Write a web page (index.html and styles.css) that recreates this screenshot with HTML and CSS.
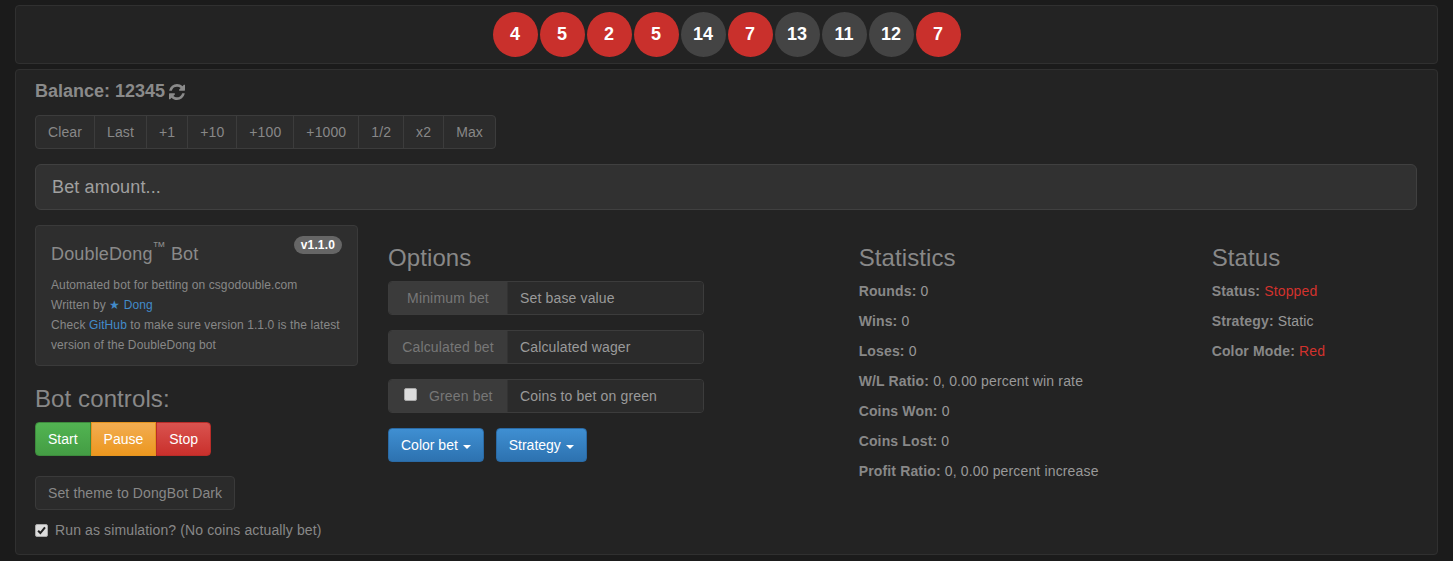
FILE: index.html
```html
<!DOCTYPE html>
<html>
<head>
<meta charset="utf-8">
<title>DoubleDong Bot</title>
<link rel="stylesheet" href="styles.css">
</head>
<body>
<div class="page">
  <div class="panel history">
    <span class="ball red">4</span>
    <span class="ball red">5</span>
    <span class="ball red">2</span>
    <span class="ball red">5</span>
    <span class="ball black">14</span>
    <span class="ball red">7</span>
    <span class="ball black">13</span>
    <span class="ball black">11</span>
    <span class="ball black">12</span>
    <span class="ball red">7</span>
  </div>

  <div class="panel main">
    <h4 class="balance">Balance: 12345
      <svg class="refresh" viewBox="0 0 1536 1536" width="16" height="16"><path fill="#8a8a8a" d="M1511 928q0 5-1 7-64 268-268 434.5T764 1536q-146 0-282.5-55T238 1324l-129 129q-19 19-45 19t-45-19-19-45V960q0-26 19-45t45-19h448q26 0 45 19t19 45-19 45l-137 137q71 66 161 102t187 36q134 0 250-65t186-179q11-17 53-117 8-23 30-23h192q13 0 22.5 9.5t9.5 22.5zm25-800v448q0 26-19 45t-45 19h-448q-26 0-45-19t-19-45 19-45l138-138Q969 256 768 256q-134 0-250 65T332 500q-11 17-53 117-8 23-30 23H50q-13 0-22.5-9.5T18 608v-7q65-268 270-434.5T768 0q146 0 284 55.5T1297 212l130-129q19-19 45-19t45 19 19 45z"/></svg>
    </h4>

    <div class="btn-group">
      <button class="btn">Clear</button><button class="btn">Last</button><button class="btn">+1</button><button class="btn">+10</button><button class="btn">+100</button><button class="btn">+1000</button><button class="btn">1/2</button><button class="btn">x2</button><button class="btn">Max</button>
    </div>

    <input class="bet-input" type="text" placeholder="Bet amount...">

    <div class="row">
      <div class="col col-3">
        <div class="well">
          <span class="badge">v1.1.0</span>
          <h4 class="bot-title">DoubleDong<sup>™</sup> Bot</h4>
          <div class="small-line">Automated bot for betting on csgodouble.com</div>
          <div class="small-line">Written by <a class="link" href="#">★ Dong</a></div>
          <div class="small-line">Check <a class="link" href="#">GitHub</a> to make sure version 1.1.0 is the latest</div>
          <div class="small-line">version of the DoubleDong bot</div>
        </div>
        <h3 class="heading">Bot controls:</h3>
        <div class="ctrl-group">
          <button class="btn-c start">Start</button><button class="btn-c pause">Pause</button><button class="btn-c stop">Stop</button>
        </div>
        <button class="btn theme-btn">Set theme to DongBot Dark</button>
        <div class="sim">
          <span class="cbox checked"><svg viewBox="0 0 12 12" width="11" height="11"><path d="M2.3 6.2 L4.8 8.8 L9.8 2.6" fill="none" stroke="#222" stroke-width="2.2"/></svg></span>
          <span>Run as simulation? (No coins actually bet)</span>
        </div>
      </div>

      <div class="col col-4">
        <h3 class="heading">Options</h3>
        <div class="input-group">
          <span class="addon">Minimum bet</span>
          <span class="field">Set base value</span>
        </div>
        <div class="input-group">
          <span class="addon">Calculated bet</span>
          <span class="field">Calculated wager</span>
        </div>
        <div class="input-group">
          <span class="addon addon-check"><span class="cbox"></span><span>Green bet</span></span>
          <span class="field">Coins to bet on green</span>
        </div>
        <div class="dropdowns">
          <button class="btn-blue">Color bet <span class="caret"></span></button>
          <button class="btn-blue">Strategy <span class="caret"></span></button>
        </div>
      </div>

      <div class="col col-3">
        <h3 class="heading">Statistics</h3>
        <p class="stat"><b>Rounds:</b> 0</p>
        <p class="stat"><b>Wins:</b> 0</p>
        <p class="stat"><b>Loses:</b> 0</p>
        <p class="stat"><b>W/L Ratio:</b> 0, 0.00 percent win rate</p>
        <p class="stat"><b>Coins Won:</b> 0</p>
        <p class="stat"><b>Coins Lost:</b> 0</p>
        <p class="stat"><b>Profit Ratio:</b> 0, 0.00 percent increase</p>
      </div>

      <div class="col col-2">
        <h3 class="heading">Status</h3>
        <p class="stat"><b>Status:</b> <span class="red-text">Stopped</span></p>
        <p class="stat"><b>Strategy:</b> Static</p>
        <p class="stat"><b>Color Mode:</b> <span class="red-text">Red</span></p>
      </div>
    </div>
  </div>
</div>
</body>
</html>
```

FILE: styles.css
```css
* { box-sizing: border-box; }
html, body { margin: 0; padding: 0; }
body {
  background: #1b1b1b;
  font-family: "Liberation Sans", Arial, sans-serif;
  font-size: 14px;
  line-height: 20px;
  color: #8a8a8a;
  letter-spacing: 0.15px;
}
.page { padding: 5px 15px 0 15px; }

.panel {
  background: #232323;
  border: 1px solid #303030;
  border-radius: 4px;
}
.history {
  height: 59px;
  padding: 6px 0;
  display: flex;
  justify-content: center;
  gap: 2px;
  margin-bottom: 5px;
}
.ball {
  width: 45px;
  height: 45px;
  border-radius: 50%;
  color: #fff;
  font-weight: bold;
  font-size: 18px;
  line-height: 45px;
  text-align: center;
  letter-spacing: 0;
}
.ball.red { background: #c9302c; }
.ball.black { background: #444; }

.main { padding: 11px 20px 14px 19px; }

.balance {
  margin: 0;
  font-size: 18px;
  line-height: 20px;
  font-weight: bold;
  color: #8a8a8a;
  letter-spacing: 0;
  display: flex;
  align-items: center;
  gap: 4px;
}
.refresh { margin-top: 1px; }

.btn-group {
  display: inline-flex;
  margin-top: 14px;
}
.btn {
  font-family: inherit;
  font-size: 14px;
  line-height: 20px;
  letter-spacing: 0.12px;
  padding: 6px 12px;
  background: #2c2c2c;
  border: 1px solid #3c3c3c;
  color: #888;
  border-radius: 4px;
  height: 34px;
}
.btn-group .btn { border-radius: 0; margin-left: -1px; }
.btn-group .btn:first-child { border-radius: 4px 0 0 4px; margin-left: 0; }
.btn-group .btn:last-child { border-radius: 0 4px 4px 0; }

.bet-input {
  display: block;
  width: 100%;
  height: 46px;
  margin-top: 15px;
  padding: 10px 16px;
  font-family: inherit;
  font-size: 18px;
  letter-spacing: 0.15px;
  background: #313131;
  border: 1px solid #404040;
  border-radius: 6px;
  color: #a0a0a0;
  outline: none;
}
.bet-input::placeholder { color: #a0a0a0; }

.row {
  display: flex;
  margin: 15px -15px 0 -15px;
}
.col { padding: 0 15px; }
.col-2 { width: 16.6667%; }
.col-3 { width: 25%; }
.col-4 { width: 33.3333%; }

.well {
  position: relative;
  background: #2e2e2e;
  border: 1px solid #3a3a3a;
  border-radius: 4px;
  padding: 19px 15px 10px 15px;
}
.badge {
  position: absolute;
  top: 10px;
  right: 15px;
  background: #666;
  color: #fff;
  font-weight: bold;
  font-size: 12px;
  line-height: 12px;
  padding: 3px 7px;
  border-radius: 9px;
}
.bot-title {
  margin: 0 0 10px 0;
  font-size: 18px;
  line-height: 1.1;
  font-weight: normal;
  color: #8a8a8a;
}
.bot-title sup { font-size: 13px; line-height: 0; position: relative; top: -2px; }
.small-line { font-size: 12px; line-height: 20px; color: #888; letter-spacing: 0.1px; }
.link { color: #428bca; text-decoration: none; }

.heading {
  margin: 20px 0 10px 0;
  font-size: 24px;
  line-height: 1.1;
  font-weight: normal;
  color: #888;
  letter-spacing: 0.1px;
}

.ctrl-group { display: flex; }
.btn-c {
  font-family: inherit;
  font-size: 14px;
  line-height: 20px;
  height: 34px;
  padding: 6px 12px;
  color: #fff;
  border: 1px solid;
  border-radius: 0;
}
.btn-c.start {
  background: linear-gradient(#52b452, #449d44);
  border-color: #3d8b3d;
  border-radius: 4px 0 0 4px;
}
.btn-c.pause {
  background: linear-gradient(#f2ad52, #ec971f);
  border-color: #e59420;
}
.btn-c.stop {
  background: linear-gradient(#d9534f, #c9302c);
  border-color: #b92c28;
  border-radius: 0 4px 4px 0;
}

.theme-btn { margin-top: 20px; display: block; background: #2b2b2b; border-color: #3a3a3a; }

.sim {
  margin-top: 10px;
  display: flex;
  align-items: center;
  gap: 7px;
  color: #888;
  letter-spacing: 0.12px;
}
.cbox {
  display: inline-flex;
  align-items: center;
  justify-content: center;
  width: 13px;
  height: 13px;
  background: #dcdcdc;
  border: 1px solid #a8a8a8;
  border-radius: 2px;
  flex: none;
}

.input-group {
  display: flex;
  width: 316px;
  height: 34px;
  margin-bottom: 15px;
  border: 1px solid #3c3c3c;
  border-radius: 4px;
  overflow: hidden;
}
.addon {
  width: 119px;
  flex: none;
  background: #3b3b3b;
  color: #777;
  text-align: center;
  line-height: 32px;
  border-right: 1px solid #333;
}
.addon-check {
  display: flex;
  align-items: center;
  justify-content: flex-start;
  padding-left: 15px;
  gap: 12px;
}
.addon-check .cbox { margin-top: -3px; }
.field {
  flex: 1;
  background: #2b2b2b;
  color: #9a9a9a;
  line-height: 32px;
  padding-left: 12px;
}

.dropdowns { display: flex; gap: 12px; margin-top: 1px; }
.btn-blue {
  font-family: inherit;
  font-size: 14px;
  line-height: 20px;
  height: 34px;
  padding: 6px 12px;
  color: #fff;
  background: linear-gradient(#3f8fd2, #2d72b0);
  border: 1px solid #2a6aa5;
  border-radius: 4px;
}
.caret {
  display: inline-block;
  width: 0;
  height: 0;
  margin-left: 1px;
  vertical-align: middle;
  border-top: 4px solid #fff;
  border-left: 4px solid transparent;
  border-right: 4px solid transparent;
}

.stat { margin: 0 0 10px 0; color: #999; }
.stat b { color: #888; }
.red-text { color: #d2322d; }
```
